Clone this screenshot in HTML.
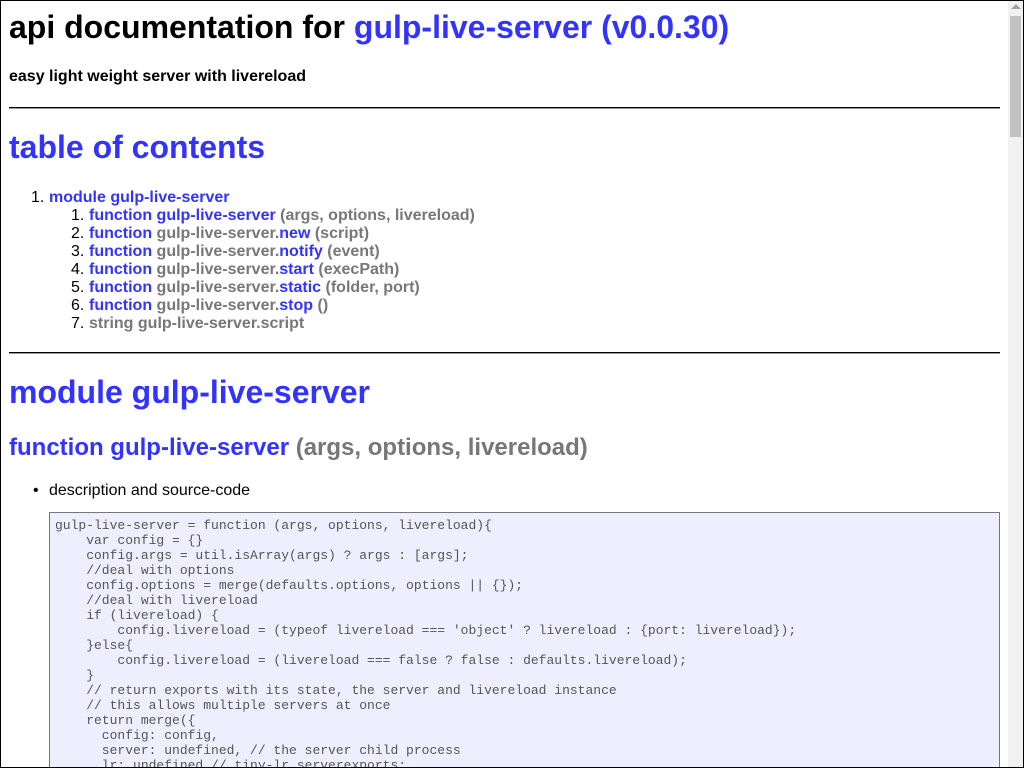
<!DOCTYPE html>
<html><head><meta charset="utf-8"><style>
html,body{margin:0;padding:0;width:1024px;height:768px;overflow:hidden;}
body{position:relative;font-family:"Liberation Sans",sans-serif;background:#fff;}
.frame{position:absolute;left:0;top:0;width:1022px;height:766px;border:1px solid #000;z-index:5;pointer-events:none}
.a{position:absolute;white-space:nowrap;}
.b{color:#33f}.g{color:#777}
.h1{font-size:32px;line-height:37px;font-weight:bold}
hr{position:absolute;left:9px;width:991px;margin:0;border:0;border-top:1px solid #000;height:1px;background:#999}
.li{font-size:16px;line-height:18px;font-weight:bold}
.n{font-weight:normal;color:#000;position:absolute;left:-18px}
pre{position:absolute;left:49px;top:512px;width:951px;height:256px;overflow:hidden;margin:0;background:#eef;border:1px solid #777;border-bottom:0;font-family:"Liberation Mono","DejaVu Sans Mono",monospace;font-size:13px;line-height:15px;color:#555;padding:5px 5px 0;box-sizing:border-box}
.sb{position:absolute;left:1008px;top:1px;width:15px;height:766px;background:#f1f1f1}
.th{position:absolute;left:1010px;top:16px;width:11px;height:121px;background:#c1c1c1}
</style></head><body>
<div class="frame"></div>
<div class="a h1" style="left:9px;top:9px">api documentation for <span class="b">gulp-live-server (v0.0.30)</span></div>
<div class="a" style="left:9px;top:68px;font-size:16px;font-weight:bold">easy light weight server with livereload</div>
<hr style="top:107px">
<div class="a h1 b" style="left:9px;top:129px">table of contents</div>
<div class="a li" style="left:49px;top:189px"><span class="n">1.</span><span class="b">module gulp-live-server</span></div>
<div class="a li" style="left:89px;top:207px"><span class="n">1.</span><span class="b">function gulp-live-server</span> <span class="g">(args, options, livereload)</span></div>
<div class="a li" style="left:89px;top:225px"><span class="n">2.</span><span class="b">function</span> <span class="g">gulp-live-server.</span><span class="b">new</span> <span class="g">(script)</span></div>
<div class="a li" style="left:89px;top:243px"><span class="n">3.</span><span class="b">function</span> <span class="g">gulp-live-server.</span><span class="b">notify</span> <span class="g">(event)</span></div>
<div class="a li" style="left:89px;top:261px"><span class="n">4.</span><span class="b">function</span> <span class="g">gulp-live-server.</span><span class="b">start</span> <span class="g">(execPath)</span></div>
<div class="a li" style="left:89px;top:279px"><span class="n">5.</span><span class="b">function</span> <span class="g">gulp-live-server.</span><span class="b">static</span> <span class="g">(folder, port)</span></div>
<div class="a li" style="left:89px;top:297px"><span class="n">6.</span><span class="b">function</span> <span class="g">gulp-live-server.</span><span class="b">stop</span> <span class="g">()</span></div>
<div class="a li" style="left:89px;top:315px"><span class="n">7.</span><span class="g">string gulp-live-server.script</span></div>
<hr style="top:352px">
<div class="a h1 b" style="left:9px;top:374px">module gulp-live-server</div>
<div class="a" style="left:9px;top:434px;font-size:24px;font-weight:bold"><span class="b">function gulp-live-server</span> <span class="g">(args, options, livereload)</span></div>
<div class="a" style="left:49px;top:482px;font-size:16px">description and source-code</div>
<div class="a" style="left:33px;top:482px;font-size:16px">•</div>
<pre>gulp-live-server = function (args, options, livereload){
    var config = {}
    config.args = util.isArray(args) ? args : [args];
    //deal with options
    config.options = merge(defaults.options, options || {});
    //deal with livereload
    if (livereload) {
        config.livereload = (typeof livereload === 'object' ? livereload : {port: livereload});
    }else{
        config.livereload = (livereload === false ? false : defaults.livereload);
    }
    // return exports with its state, the server and livereload instance
    // this allows multiple servers at once
    return merge({
      config: config,
      server: undefined, // the server child process
      lr: undefined // tiny-lr serverexports;
</pre>
<div class="sb"></div><div class="th"></div>
<div class="a" style="left:1011px;top:4px;width:0;height:0;border-left:5px solid transparent;border-right:5px solid transparent;border-bottom:5px solid #a3a3a3"></div>
</body></html>
